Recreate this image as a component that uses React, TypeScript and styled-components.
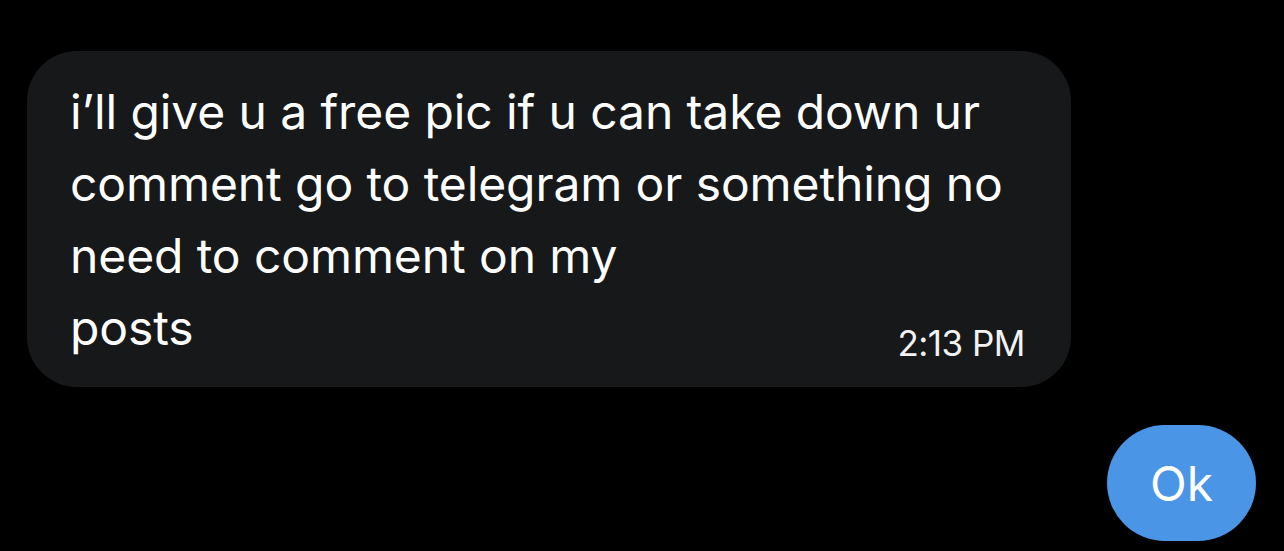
import React from "react";
import styled, { createGlobalStyle } from "styled-components";

const Global = createGlobalStyle`
  html, body { margin: 0; padding: 0; background: #000; }
  body { font-family: Inter, "Liberation Sans", sans-serif; -webkit-font-smoothing: antialiased; }
`;

const Thread = styled.div`
  display: flex;
  flex-direction: column;
  gap: 38px;
  padding: 51px 28px 0 27px;
  width: 1284px;
  box-sizing: border-box;
`;

const Incoming = styled.div`
  align-self: flex-start;
  width: 1044px;
  box-sizing: border-box;
  background: #17181a;
  border-radius: 50px;
  padding: 25px 46px 23px 43px;
  color: #fff;
`;

const Line = styled.div`
  font-size: 48px;
  line-height: 72px;
  letter-spacing: -0.1px;
  white-space: nowrap;
`;

const LastRow = styled.div`
  display: flex;
  justify-content: space-between;
  align-items: flex-end;
`;

const Time = styled.span`
  font-size: 35px;
  line-height: 35px;
  letter-spacing: -0.5px;
  margin-bottom: 3px;
  color: #f2f2f2;
`;

const Outgoing = styled.div`
  align-self: flex-end;
  width: 149px;
  height: 116px;
  box-sizing: border-box;
  background: #4a95e5;
  border-radius: 58px;
  display: flex;
  align-items: center;
  justify-content: center;
  color: #fff;
  font-size: 48px;
`;

const lines = [
  "i\u2019ll give u a free pic if u can take down ur",
  "comment go to telegram or something no",
  "need to comment on my",
];

export default function App() {
  return (
    <>
      <Global />
      <Thread>
        <Incoming>
          {lines.map((l) => (
            <Line key={l}>{l}</Line>
          ))}
          <LastRow>
            <Line>posts</Line>
            <Time>2:13 PM</Time>
          </LastRow>
        </Incoming>
        <Outgoing>Ok</Outgoing>
      </Thread>
    </>
  );
}
